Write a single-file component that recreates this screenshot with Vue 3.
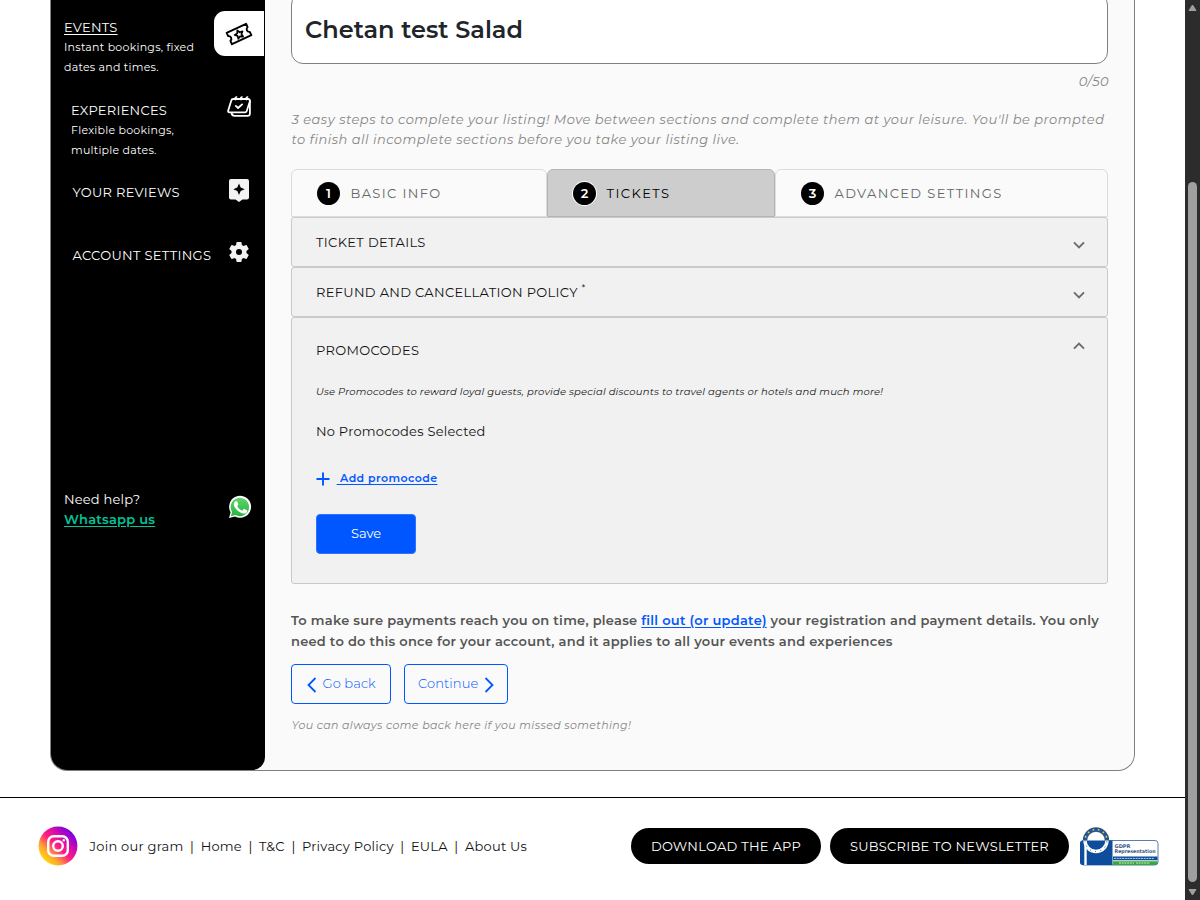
<script setup>
const tabs = [
  { n: 1, label: 'BASIC INFO', cls: 'tab-basic' },
  { n: 2, label: 'TICKETS', cls: 'tab-tickets' },
  { n: 3, label: 'ADVANCED SETTINGS', cls: 'tab-advanced' },
]
const links = [
  { label: 'Join our gram', cls: '' },
  { label: 'Home', cls: '' },
  { label: 'T&C', cls: 'tight' },
  { label: 'Privacy Policy', cls: '' },
  { label: 'EULA', cls: '' },
  { label: 'About Us', cls: '' },
]
const stars = [200, 228, 256, 284, 312, 340].map((a) => ({
  x: 16 + 11 * Math.cos((a * Math.PI) / 180),
  y: 14.5 + 11 * Math.sin((a * Math.PI) / 180),
}))
</script>

<template>
  <div class="window">
    <div class="page">
      <section class="shell">
        <aside class="sidebar">
          <div class="item events">
            <div>
              <a class="title underlined">EVENTS</a>
              <p class="sub">Instant bookings, fixed<br />dates and times.</p>
            </div>
            <div class="active-icon">
              <svg width="28" height="28" viewBox="0 0 28 28" fill="none" stroke="#000" stroke-width="1.9" stroke-linejoin="round">
                <g transform="rotate(-25 14 14)">
                  <path d="M3.300 7.700h21.400v3.700a2.700 2.700 0 0 0 0 5.200V20.300H3.300v-3.700a2.700 2.700 0 0 0 0-5.200z" />
                  <path d="M14 9.900l1.300 2.800 3 .35-2.200 2.050.55 2.950L14 16.600l-2.650 1.450.55-2.950-2.200-2.050 3-.35z" stroke-width="1.700" />
                </g>
              </svg>
            </div>
          </div>
          <div class="item experiences">
            <div>
              <a class="title">EXPERIENCES</a>
              <p class="sub">Flexible bookings,<br />multiple dates.</p>
            </div>
            <svg class="cal" width="24" height="22" viewBox="0 0 24 22" fill="none" stroke="#fff" stroke-width="1.800" stroke-linejoin="round" stroke-linecap="round">
              <path d="M4.300 4.500Q4.700 3 6.200 3h14.600Q23.200 3 22.900 5.200l-3.200 9.800Q19.300 16.300 18 16.300H2.800Q.7 16.300 1.200 14.500z" />
              <path d="M4.500 17Q5 19.800 7.500 19.800h13q2.400 0 2.400-2.400V5.500" />
              <path d="M8.500 3.500q-.8-2 1-2.500M14 3.500q-.8-2 1-2.500M19.500 3.500q-.8-2 1-2.500" stroke-width="1.700" />
              <path d="M8.800 9.900l2.300 2.100 4-3.600" />
            </svg>
          </div>
          <div class="item reviews">
            <a class="title wide">YOUR REVIEWS</a>
            <svg width="20" height="24" viewBox="0 0 20 24">
              <path d="M2 0h16a2 2 0 0 1 2 2v16.500a2 2 0 0 1-2 2h-4.500L10 23l-3.500-2.500H2a2 2 0 0 1-2-2V2a2 2 0 0 1 2-2z" fill="#f2f2f2" />
              <path d="M10 4.500l1.700 4 4 1.700-4 1.700-1.700 4-1.700-4-4-1.700 4-1.700z" fill="#000" />
            </svg>
          </div>
          <div class="item account">
            <a class="title wide">ACCOUNT SETTINGS</a>
            <svg width="24" height="24" viewBox="0 0 24 24">
              <path d="M19.430 12.980c.04-.32.07-.64.07-.98s-.03-.66-.07-.98l2.110-1.650c.19-.15.24-.42.12-.64l-2-3.460c-.12-.22-.39-.3-.61-.22l-2.490 1c-.52-.4-1.080-.73-1.690-.98l-.38-2.650C14.460 2.180 14.250 2 14 2h-4c-.25 0-.46.18-.49.42l-.38 2.650c-.61.25-1.170.59-1.690.98l-2.490-1c-.23-.09-.49 0-.61.22l-2 3.460c-.13.22-.07.49.12.64l2.110 1.650c-.04.32-.07.65-.07.98s.03.66.07.98l-2.110 1.650c-.19.15-.24.42-.12.64l2 3.460c.12.22.39.3.61.22l2.490-1c.52.4 1.080.73 1.690.98l.38 2.650c.03.24.24.42.49.42h4c.25 0 .46-.18.49-.42l.38-2.650c.61-.25 1.170-.59 1.690-.98l2.490 1c.23.09.49 0 .61-.22l2-3.460c.12-.22.07-.49-.12-.64zM12 15a3 3 0 1 1 0-6 3 3 0 0 1 0 6z" fill="#f2f2f2" />
            </svg>
          </div>
          <div class="item help">
            <div>
              <p class="title need">Need help?</p>
              <a class="whatsapp">Whatsapp us</a>
            </div>
            <svg width="24" height="24" viewBox="0 0 24 24">
              <defs>
                <linearGradient id="wa" x1="0" y1="0" x2="0" y2="1">
                  <stop offset="0" stop-color="#5fd46b" />
                  <stop offset="1" stop-color="#27b43e" />
                </linearGradient>
              </defs>
              <path d="M1 23l1.600-5.700A11 11 0 1 1 7 21.500z" fill="#fff" />
              <path d="M2.900 21.200l1.200-4.200a9.200 9.200 0 1 1 3.300 3.100z" fill="url(#wa)" />
              <path d="M9.300 6.800c-.25-.55-.5-.55-.75-.55h-.65c-.25 0-.6.1-.9.450-.3.350-1.150 1.100-1.150 2.700s1.200 3.200 1.350 3.400c.15.2 2.300 3.600 5.650 4.900 2.800 1.100 3.350.9 3.950.8.600-.05 1.950-.8 2.200-1.550.3-.75.3-1.400.2-1.550-.1-.15-.3-.2-.65-.4-.3-.15-1.950-.95-2.250-1.050-.3-.1-.55-.15-.75.150-.2.350-.85 1.050-1.050 1.300-.2.200-.4.250-.7.100-.35-.2-1.400-.5-2.650-1.650-1-.85-1.650-1.950-1.850-2.300-.2-.3 0-.5.150-.65l.5-.6c.15-.15.2-.3.300-.5.100-.2.050-.4 0-.55z" fill="#fff" />
            </svg>
          </div>
        </aside>

        <main class="main">
          <div class="name-input">Chetan test Salad</div>
          <p class="counter">0/50</p>
          <p class="intro">
            3 easy steps to complete your listing! Move between sections and complete them at your leisure. You'll be prompted<br />to finish all incomplete sections before you take your listing live.
          </p>

          <nav class="tabs">
            <div v-for="t in tabs" :key="t.n" class="tab" :class="[t.cls, { active: t.n === 2 }]">
              <span class="num">{{ t.n }}</span><span class="tab-label">{{ t.label }}</span>
            </div>
          </nav>

          <section class="row">
            <h3 class="ticket-details">TICKET DETAILS</h3>
            <svg width="12" height="8" viewBox="0 0 12 8"><path d="M1 1.300l5 5 5-5" /></svg>
          </section>
          <section class="row">
            <h3>REFUND AND CANCELLATION POLICY <sup>*</sup></h3>
            <svg width="12" height="8" viewBox="0 0 12 8"><path d="M1 1.300l5 5 5-5" /></svg>
          </section>
          <section class="row open">
            <header>
              <h3>PROMOCODES</h3>
              <svg width="12" height="8" viewBox="0 0 12 8"><path d="M1 6.700l5-5 5 5" /></svg>
            </header>
            <p class="hint">Use Promocodes to reward loyal guests, provide special discounts to travel agents or hotels and much more!</p>
            <p class="none">No Promocodes Selected</p>
            <div class="add">
              <svg width="14" height="14" viewBox="0 0 14 14"><path d="M7 .5v13M.5 7h13" stroke="#0057ff" stroke-width="2" /></svg>
              <a>&nbsp;Add promocode</a>
            </div>
            <button class="save">Save</button>
          </section>

          <p class="payments">
            To make sure payments reach you on time, please <a>fill out (or update)</a> your registration and payment details. You only<br />need to do this once for your account, and it applies to all your events and experiences
          </p>
          <div class="actions">
            <button class="back">
              <svg width="10" height="16" viewBox="0 0 10 16"><path d="M8.500 1L1.500 8l7 7" /></svg><span>Go back</span>
            </button>
            <button class="next">
              <span>Continue</span><svg width="10" height="16" viewBox="0 0 10 16"><path d="M1.500 1l7 7-7 7" /></svg>
            </button>
          </div>
          <p class="always">You can always come back here if you missed something!</p>
        </main>
      </section>

      <footer class="footer">
        <svg class="insta" width="40" height="40" viewBox="0 0 40 40">
          <defs>
            <linearGradient id="ig" x1=".1" y1=".9" x2=".9" y2=".1">
              <stop offset="0" stop-color="#ffe600" />
              <stop offset=".25" stop-color="#ffa235" />
              <stop offset=".48" stop-color="#ff1d82" />
              <stop offset=".65" stop-color="#e0109f" />
              <stop offset=".88" stop-color="#8f00d8" />
              <stop offset="1" stop-color="#7a00e0" />
            </linearGradient>
          </defs>
          <circle cx="20" cy="20" r="19.400" fill="url(#ig)" />
          <g fill="none" stroke="#fff" stroke-width="2.400">
            <rect x="10.200" y="10.200" width="19.600" height="19.600" rx="5.500" />
            <circle cx="20" cy="20" r="4.800" />
          </g>
          <circle cx="25.800" cy="14.300" r="1.200" fill="#fff" />
        </svg>
        <nav class="links">
          <template v-for="(l, i) in links" :key="l.label">
            <span v-if="i" class="sep">|</span><a :class="l.cls">{{ l.label }}</a>
          </template>
        </nav>
        <button class="pill download">DOWNLOAD THE APP</button>
        <button class="pill subscribe">SUBSCRIBE TO NEWSLETTER</button>
        <svg class="gdpr" width="80" height="40" viewBox="0 0 80 40">
          <rect x=".5" y="14.500" width="77.500" height="24.500" rx="3" fill="#fff" stroke="#5b7fae" />
          <path d="M32.500 14.500H3a3 3 0 0 0-3 3V36a3 3 0 0 0 3 3h29.500z" fill="#0e4c9c" />
          <rect x="4.300" y="17" width="2.400" height="22" fill="#fff" />
          <circle cx="16" cy="14.500" r="9" fill="#fff" />
          <path d="M6.500 14.500h19a9.500 9.500 0 0 1-19 0z" fill="#0e4c9c" />
          <path d="M5 14.500a11 11 0 0 1 22 0" fill="none" stroke="#28558f" stroke-width="4.400" />
          <path d="M5 14.500a11 11 0 0 0 22 0" fill="none" stroke="#fff" stroke-width="3.400" />
          <path d="M5 14.500a11 11 0 0 0 22 0" fill="none" stroke="#0e4c9c" stroke-width="1" stroke-dasharray="1 4.400" />
          <circle v-for="s in stars" :key="s.x" :cx="s.x" :cy="s.y" r=".9" fill="#e8cf3a" />
          <text x="34.500" y="22.200" class="gdpr-text" textLength="16" lengthAdjust="spacingAndGlyphs">GDPR</text>
          <text x="34.500" y="27.200" class="gdpr-text" textLength="41" lengthAdjust="spacingAndGlyphs">Representation</text>
          <rect x="33" y="30.500" width="44.500" height="3.800" fill="#0e4c9c" />
          <path d="M34 32.400h40" stroke="#b9cbe3" stroke-width="1" stroke-dasharray="2 .7" />
          <path d="M33 35.300h44.500v.7a3 3 0 0 1-3 3H33z" fill="#38a838" />
          <path d="M39 37h15M56 37h14" stroke="#c9ebc9" stroke-width="1" stroke-dasharray="2 .7" />
        </svg>
      </footer>
    </div>

    <div class="scrollbar">
      <svg width="9" height="8" viewBox="0 0 9 8"><path d="M4.500 1L8 6.500H1z" /></svg>
      <div class="thumb"></div>
      <svg width="9" height="8" viewBox="0 0 9 8"><path d="M4.500 7L8 1.500H1z" /></svg>
    </div>
  </div>
</template>

<style>
body { margin: 0; overflow: hidden; background: #fff; }
</style>

<style scoped>
* { box-sizing: border-box; }
p, h3 { margin: 0; font-weight: 400; }
button { font: inherit; letter-spacing: inherit; margin: 0; padding: 0; }
svg { display: block; flex: none; }
.window {
  display: flex; width: 1200px; height: 900px; overflow: hidden;
  font-family: Montserrat, Inter, sans-serif; font-size: 13px; letter-spacing: .26px; color: #111;
}
.page { width: 1185px; height: 900px; }
.shell {
  display: flex; width: 1085px; height: 771px; margin-left: 50px; overflow: hidden;
  border: 1px solid #808080; border-top: 0; border-radius: 0 0 17px 17px; background: #fafafa;
}

.sidebar { width: 214px; height: 770px; background: #000; color: #fff; border-radius: 0 0 13px 0; }
.item { display: flex; justify-content: space-between; align-items: flex-start; padding: 0 13px; }
.title { display: block; font-size: 13px; line-height: 19px; color: #fff; }
.wide { letter-spacing: .32px; }
.underlined { text-decoration: underline; text-underline-offset: 2px; }
.sub { font-size: 11px; line-height: 20px; letter-spacing: .25px; white-space: nowrap; }
.events { height: 101px; padding-top: 18px; padding-right: 1px; }
.active-icon {
  display: flex; align-items: center; justify-content: center; width: 50px; height: 45px;
  margin-top: -7px; background: #fff; border-radius: 11px 0 0 11px;
}
.experiences { height: 78px; padding: 0 14px 0 20px; }
.cal { margin-top: -5px; }
.reviews { height: 63px; padding: 0 16px 0 21.5px; }
.reviews .title { margin-top: 4px; }
.account { height: 247px; padding: 0 14px 0 21.5px; }
.account .title { margin-top: 4px; }
.account svg { margin-top: -2px; }
.help .title { line-height: 20px; letter-spacing: .2px; }
.whatsapp { display: block; line-height: 20px; font-weight: 600; color: #00c49a; text-decoration: underline; text-underline-offset: 2px; letter-spacing: .24px; }
.help svg { margin-top: 6px; }

.main { padding-left: 26px; width: 843px; }
.name-input {
  width: 817px; height: 71px; margin-top: -7px; padding: 21px 13px 0;
  border: 1px solid #808080; border-radius: 12px; background: #fff; color: #212529;
  font-size: 24px; line-height: 30px; font-weight: 600; letter-spacing: .03px;
}
.counter { margin: 7px -1px 0 0; line-height: 20px; text-align: right; font-style: italic; color: #868686; letter-spacing: .4px; }
.intro { margin: 18px 0 0 .5px; line-height: 20px; font-style: italic; color: #868686; letter-spacing: .49px; white-space: nowrap; }
.tabs { display: flex; width: 817px; height: 48px; margin-top: 20px; }
.tab {
  display: flex; align-items: center; height: 48px; padding-left: 25px;
  border: 1px solid #dcdcdc; border-radius: 6px 6px 0 0; color: #666; letter-spacing: 1.380px;
}
.tab-basic { width: 256px; }
.tab-tickets { width: 228px; }
.tab-advanced { width: 333px; }
.tab.active { background: #cdcdcd; border-color: #b4b4b4; color: #000; letter-spacing: 1.45px; }
.num {
  display: flex; align-items: center; justify-content: center; width: 23px; height: 23px; margin-right: 10.500px;
  border-radius: 50%; background: #000; color: #fff; font-weight: 600; letter-spacing: 0;
}
.active .num { box-shadow: 0 0 0 1px #fff; margin-right: 10.5px; }
.row {
  display: flex; justify-content: space-between; align-items: center; width: 817px; height: 50px;
  padding: 0 22px 0 24px; border: 1px solid #cacaca; border-radius: 3px; background: #f1f1f1;
}
.row h3 { font-size: 13px; line-height: 20px; letter-spacing: .335px; white-space: nowrap; }
.row .ticket-details { letter-spacing: .36px; }
.row > svg { margin-top: 6px; }
.row svg path { fill: none; stroke: #6b6b6b; stroke-width: 1.900; }
.row svg path[stroke] { stroke: #0057ff; }
sup { font-size: 10px; line-height: 0; vertical-align: 6px; }
.open { display: block; height: 267px; padding-top: 22px; }
.open header { display: flex; justify-content: space-between; align-items: flex-start; height: 20px; }
.open header svg { margin-top: 2px; }
.hint { margin-top: 22px; font-size: 10px; line-height: 20px; font-style: italic; letter-spacing: .205px; white-space: nowrap; }
.none { margin-top: 19px; line-height: 20px; letter-spacing: .24px; }
.add { display: flex; align-items: center; height: 20px; margin-top: 27px; }
.add svg { margin-top: 1px; }
.add a { margin-left: 6.600px; font-size: 11px; font-weight: 600; letter-spacing: .42px; color: #0057ff; text-decoration: underline; text-underline-offset: 2px; }
.save {
  width: 100px; height: 40px; margin-top: 26px; padding-bottom: 2px; border: 1px solid #2e72ff; border-radius: 4px;
  background: #0057ff; color: #fff; letter-spacing: -.08px;
}
.payments { margin-top: 26px; line-height: 21px; font-weight: 600; letter-spacing: .252px; color: #555; white-space: nowrap; }
.payments a { color: #0057ff; text-decoration: underline; text-underline-offset: 2px; }
.actions { display: flex; gap: 13px; margin-top: 12px; }
.actions button {
  display: flex; align-items: center; height: 40px; border: 1px solid #0057ff; border-radius: 4px;
  background: transparent; color: #0057ff; font-weight: 300; letter-spacing: .12px;
}
.actions span { margin-bottom: 2px; }
.actions svg path { fill: none; stroke: #0057ff; stroke-width: 1.800; }
.back { width: 100px; padding-left: 14.5px; }
.back svg { margin: 2px 6px 0 0; }
.next { width: 104px; padding-left: 13px; }
.next svg { margin: 2px 0 0 5.500px; }
.always { margin: 11px 0 0 .5px; font-size: 11px; line-height: 20px; font-style: italic; letter-spacing: .37px; color: #868686; white-space: nowrap; }

.footer { display: flex; align-items: center; height: 97px; margin-top: 26px; border-top: 1px solid #000; padding-left: 38px; }
.links { display: flex; width: 541.5px; margin-left: 11.5px; white-space: nowrap; letter-spacing: .24px; }
.tight { letter-spacing: .3px; }
.sep { width: 17.1px; text-align: center; }
.pill { height: 36px; border: 0; border-radius: 18px; background: #000; color: #fff; white-space: nowrap; }
.download { width: 190px; }
.subscribe { width: 239px; margin-left: 9px; }
.gdpr { margin-left: 11px; }
.gdpr-text { font: bold 5px "DejaVu Sans", sans-serif; letter-spacing: 0; fill: #3a5788; }

.scrollbar { display: flex; flex-direction: column; align-items: center; width: 15px; height: 900px; padding: 4px 0; background: #2c2c2c; }
.scrollbar path { fill: #9f9f9f; stroke: #9f9f9f; stroke-linejoin: round; }
.thumb { width: 9px; height: 700px; margin: 170px 0 6px; border-radius: 5px; background: #9f9f9f; }
</style>
